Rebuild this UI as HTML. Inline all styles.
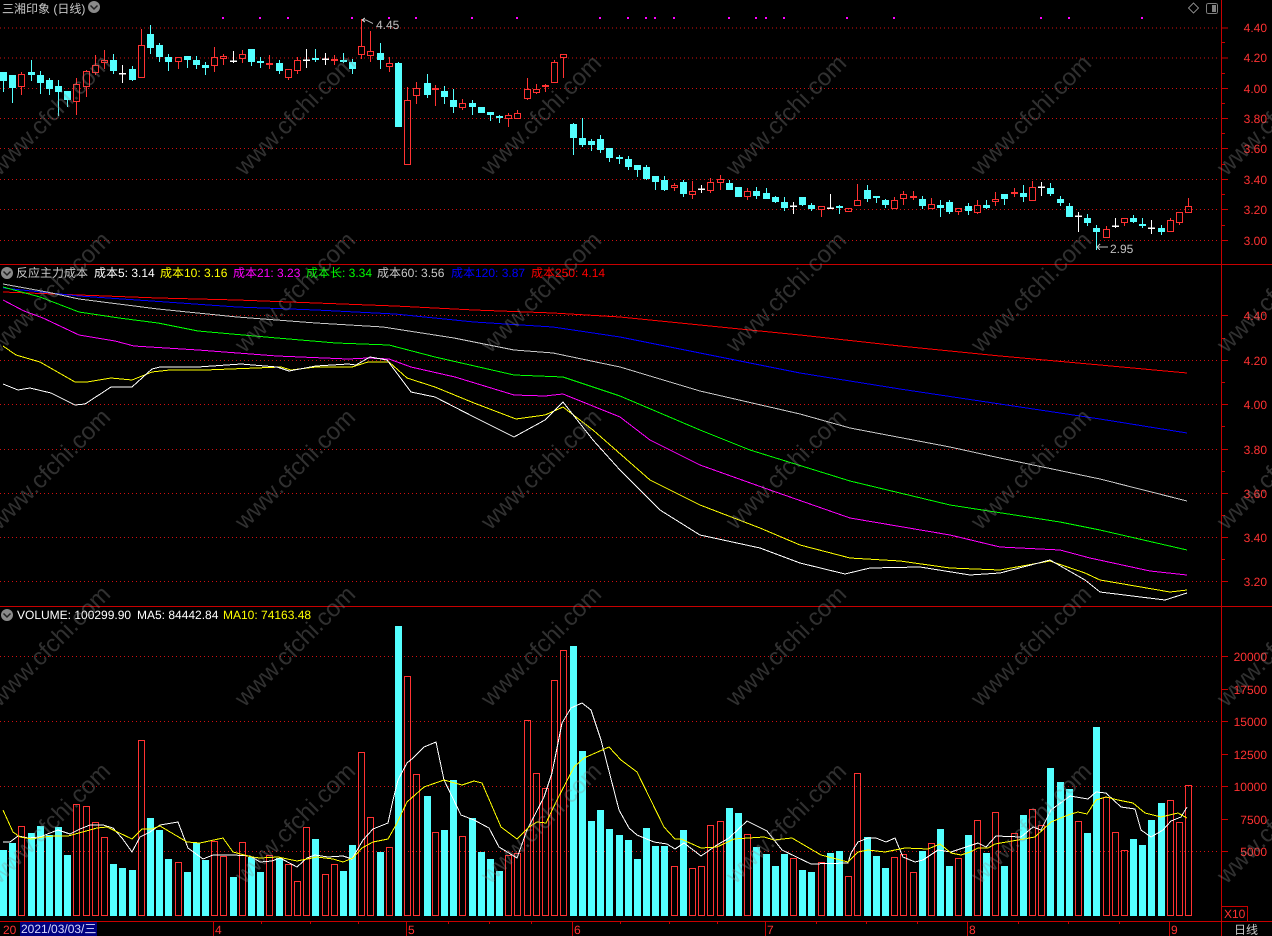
<!DOCTYPE html>
<html><head><meta charset="utf-8"><title>三湘印象</title>
<style>
html,body{margin:0;padding:0;background:#000;width:1272px;height:936px;overflow:hidden}
svg{display:block;position:absolute;left:0;top:0}
text{font-family:"Liberation Sans","WenQuanYi Zen Hei","Noto Sans CJK SC",sans-serif;font-size:12px;text-rendering:geometricPrecision}
</style></head><body>
<svg width="1272" height="936" viewBox="0 0 1272 936" xmlns="http://www.w3.org/2000/svg">
<rect width="1272" height="936" fill="#000"/>
<g shape-rendering="crispEdges">
<!-- grids -->
<path fill="none" stroke="#D01010" stroke-dasharray="1 3" d="M0 28H1218M0 58H1218M0 88.500H1218M0 118.500H1218M0 148.500H1218M0 179.500H1218M0 209.500H1218M0 240.500H1218M0 315.500H1218M0 360.500H1218M0 404.500H1218M0 449.500H1218M0 493.500H1218M0 537.500H1218M0 581.500H1218M0 656.500H1218M0 721.500H1218M0 786.500H1218M0 851.500H1218"/>
<!-- frame -->
<path fill="none" stroke="#C80000" d="M0 264.500H1272M0 606.500H1272M0 921.500H1272M1221.500 0V936M1222 906.500H1247.500V921"/>
<!-- axis ticks -->
<path fill="none" stroke="#C80000" d="M1222 28H1228M1222 58H1228M1222 88.500H1228M1222 118.500H1228M1222 148.500H1228M1222 179.500H1228M1222 209.500H1228M1222 240.500H1228M1222 42.500H1225M1222 73.500H1225M1222 103.500H1225M1222 133.500H1225M1222 164.500H1225M1222 194.500H1225M1222 225.500H1225M1222 315.500H1228M1222 360.500H1228M1222 404.500H1228M1222 449.500H1228M1222 493.500H1228M1222 537.500H1228M1222 581.500H1228M1222 338.500H1225M1222 382.500H1225M1222 426.500H1225M1222 471.500H1225M1222 515.500H1225M1222 559.500H1225M1222 656.500H1228M1222 689.500H1228M1222 721.500H1228M1222 754.500H1228M1222 786.500H1228M1222 819.500H1228M1222 851.500H1228M213.500 921V936M406.500 921V936M572.500 921V936M765.500 921V936M967.500 921V936M1169.500 921V936M261.500 921V924M310.500 921V924M358.500 921V924M448.500 921V924M489.500 921V924M531.500 921V924M620.500 921V924M669.500 921V924M717.500 921V924M816.500 921V924M866.500 921V924M917.500 921V924M1018.500 921V924M1068.500 921V924M1119.500 921V924"/>
<!-- magenta marks -->
<path fill="none" stroke="#FF00FF" stroke-width="2" d="M222 18h2M259 18h2M287 18h2M351 18h2M388 18h2M415 18h2M471 18h2M516 18h2M599 18h2M627 18h2M645 18h2M654 18h2M673 18h2M728 18h2M755 18h2M765 18h2M783 18h2M846 18h2M893 18h2M1040 18h2M1068 18h2M1141 18h2"/>
<!-- candles: cyan wicks -->
<path fill="none" stroke="#54FFFF" d="M3.500 72V92M12.500 75V103M31.500 60V81M40.500 71V94M49.500 78V95M58.500 80V116M67.500 91V107M113.500 54V74M132.500 66V81M150.500 25V54M159.500 43V62M168.500 54V71M187.500 56V68M196.500 56V69M205.500 62V75M251.500 49V66M260.500 57V68M279.500 60V74M315.500 49V62M343.500 53V63M352.500 59V74M380.500 43V69M398.500 62V127M427.500 74V98M444.500 86V104M453.500 89V113M472.500 100V115M490.500 112V121M499.500 115V123M573.500 123V155M582.500 118V147M591.500 139V151M600.500 135V153M609.500 148V162M619.500 155V164M628.500 156V170M637.500 165V177M646.500 165V180M655.500 176V190M664.500 176V191M683.500 180V197M729.500 180V190M756.500 187V199M766.500 188V199M775.500 196V203M784.500 197V211M802.500 197V206M811.500 203V211M839.500 205V214M867.500 185V202M876.500 196V203M885.500 199V208M922.500 196V209M940.500 200V217M949.500 200V214M968.500 203V215M986.500 200V209M1004.500 194V205M1023.500 185V202M1050.500 183V196M1060.500 196V206M1069.500 203V217M1087.500 214V226M1096.500 225V250M1133.500 215V223M1142.500 218V228M1161.500 225V235"/>
<!-- cyan bodies -->
<path fill="none" stroke="#54FFFF" stroke-width="7" d="M3.500 72V81M12.500 75V88M31.500 72V75M40.500 75V83M49.500 80V89M58.500 86V92M67.500 91V100M113.500 60V71M132.500 69V80M150.500 34V48M159.500 45V57M168.500 57V62M187.500 56V60M196.500 60V65M205.500 65V68M251.500 49V62M260.500 61V63M279.500 63V71M315.500 58V60M343.500 60V62M352.500 62V69M380.500 53V60M398.500 63V127M427.500 83V95M444.500 91V97M453.500 100V107M472.500 103V107M481.500 107V113M490.500 112V115M499.500 116V118M573.500 124V138M582.500 138V145M591.500 141V145M600.500 139V150M609.500 148V158M619.500 157V159M628.500 159V167M637.500 165V170M646.500 167V179M655.500 176V182M664.500 180V190M683.500 182V194M729.500 183V190M738.500 187V197M756.500 191V196M766.500 193V199M775.500 197V202M784.500 202V208M802.500 197V205M811.500 205V209M839.500 206V208M867.500 190V199M876.500 196V198M885.500 200V205M922.500 199V206M940.500 205V208M949.500 202V212M968.500 206V211M986.500 205V208M1004.500 194V199M1023.500 193V197M1050.500 188V194M1060.500 199V203M1069.500 206V217M1087.500 218V223M1096.500 228V232M1133.500 218V222M1142.500 224V226M1161.500 228V232"/>
<!-- white dojis -->
<path fill="none" stroke="#fff" d="M122.500 65V83M233.500 51V63M306.500 49V68M325.500 53V65M701.500 185V193M793.500 202V214M830.500 194V209M1041.500 182V196M1078.500 212V232M1115.500 218V228M1151.500 220V234"/>
<path fill="none" stroke="#fff" stroke-width="7" d="M122.500 73V74.500M233.500 60.500V62M306.500 59.500V61M325.500 58.500V60M701.500 188.500V190M793.500 205.500V207M830.500 207.500V209M1041.500 186.500V188M1078.500 215.500V217M1115.500 225.500V227M1151.500 227.500V229"/>
<!-- red candles wicks -->
<path fill="none" stroke="#FF3232" d="M21.500 72V74M21.500 87V95M76.500 78V84M76.500 102V115M86.500 70V71M86.500 87V97M95.500 55V65M95.500 73V75M104.500 50V60M104.500 63V69M141.500 29V45M178.500 62V69M214.500 47V57M214.500 66V72M223.500 54V56M223.500 59V65M242.500 50V54M242.500 59V63M269.500 55V63M269.500 65V69M288.500 78V80M297.500 57V60M297.500 71V74M361.500 19V46M361.500 55V59M370.500 31V51M370.500 56V62M389.500 57V63M389.500 67V72M407.500 87V100M416.500 82V88M416.500 96V104M462.500 99V103M462.500 108V110M508.500 113V115M508.500 119V127M517.500 110V113M527.500 78V89M527.500 99V100M536.500 84V89M536.500 93V94M545.500 84V85M545.500 87V92M554.500 60V62M563.500 58V78M674.500 183V185M674.500 188V191M692.500 181V191M692.500 195V199M710.500 178V182M710.500 191V193M720.500 175V179M720.500 183V190M747.500 188V191M747.500 197V200M821.500 210V217M857.500 184V200M894.500 197V200M903.500 191V194M903.500 199V205M931.500 198V204M958.500 212V215M977.500 200V205M977.500 213V214M995.500 192V199M995.500 202V206M1032.500 181V187M1106.500 226V229M1124.500 223V226M1170.500 218V220M1179.500 223V225M1188.500 198V206M334.500 55V65M435.500 85V106M913.500 191V200M1014.500 188V197"/>
<path fill="none" stroke="#FF3232" stroke-width="7" d="M334.500 59V61M435.500 88V90M913.500 196V198M1014.500 192V194"/>
<!-- red hollow bodies -->
<path fill="none" stroke="#FF3232" d="M18.500 74.500h6V86.500h-6zM73.500 84.500h6V101.500h-6zM83.500 71.500h6V86.500h-6zM92.500 65.500h6V72.500h-6zM101.500 60.500h6V62.500h-6zM138.500 45.500h6V77.500h-6zM175.500 57.500h6V61.500h-6zM211.500 57.500h6V65.500h-6zM220.500 56.500h6V58.500h-6zM239.500 54.500h6V58.500h-6zM266.500 63.500h6V64.500h-6zM285.500 69.500h6V77.500h-6zM294.500 60.500h6V70.500h-6zM358.500 46.500h6V54.500h-6zM367.500 51.500h6V55.500h-6zM386.500 63.500h6V66.500h-6zM404.500 100.500h6V164.500h-6zM413.500 88.500h6V95.500h-6zM459.500 103.500h6V107.500h-6zM505.500 115.500h6V118.500h-6zM514.500 113.500h6V118.500h-6zM524.500 89.500h6V98.500h-6zM533.500 89.500h6V92.500h-6zM542.500 85.500h6V86.500h-6zM551.500 62.500h6V82.500h-6zM560.500 54.500h6V57.500h-6zM671.500 185.500h6V187.500h-6zM689.500 191.500h6V194.500h-6zM707.500 182.500h6V190.500h-6zM717.500 179.500h6V182.500h-6zM744.500 191.500h6V196.500h-6zM818.500 206.500h6V209.500h-6zM845.500 208.500h6V211.500h-6zM854.500 200.500h6V205.500h-6zM891.500 200.500h6V208.500h-6zM900.500 194.500h6V198.500h-6zM928.500 204.500h6V208.500h-6zM955.500 208.500h6V211.500h-6zM974.500 205.500h6V212.500h-6zM992.500 199.500h6V201.500h-6zM1029.500 187.500h6V200.500h-6zM1103.500 229.500h6V237.500h-6zM1121.500 218.500h6V222.500h-6zM1167.500 220.500h6V231.500h-6zM1176.500 212.500h6V222.500h-6zM1185.500 206.500h6V212.500h-6z"/>
<!-- volume cyan -->
<path fill="none" stroke="#54FFFF" stroke-width="7" d="M3.500 850V916M12.500 843V916M31.500 833V916M40.500 826V916M49.500 835V916M58.500 827V916M67.500 855V916M113.500 864V916M122.500 868V916M132.500 870V916M150.500 818V916M159.500 830V916M168.500 859V916M187.500 872V916M196.500 843V916M205.500 860V916M233.500 877V916M251.500 857V916M260.500 872V916M279.500 858V916M315.500 839V916M343.500 871V916M352.500 845V916M380.500 852V916M398.500 626V916M427.500 796V916M444.500 830V916M453.500 780V916M472.500 818V916M481.500 852V916M490.500 859V916M499.500 871V916M573.500 646V916M582.500 751V916M591.500 821V916M600.500 810V916M609.500 829V916M619.500 835V916M628.500 840V916M637.500 859V916M646.500 828V916M655.500 846V916M664.500 846V916M683.500 830V916M729.500 808V916M738.500 813V916M756.500 847V916M766.500 854V916M775.500 866V916M784.500 854V916M802.500 870V916M811.500 872V916M830.500 853V916M839.500 851V916M867.500 837V916M876.500 856V916M885.500 868V916M922.500 851V916M940.500 829V916M949.500 866V916M968.500 835V916M986.500 853V916M1004.500 866V916M1023.500 815V916M1050.500 768V916M1060.500 782V916M1069.500 789V916M1087.500 833V916M1096.500 727V916M1133.500 839V916M1142.500 845V916M1151.500 820V916M1161.500 803V916"/>
<!-- volume red -->
<path fill="none" stroke="#FF3232" d="M18.500 826.500h6V915.500h-6zM73.500 804.500h6V915.500h-6zM83.500 806.500h6V915.500h-6zM92.500 822.500h6V915.500h-6zM101.500 837.500h6V915.500h-6zM138.500 740.500h6V915.500h-6zM175.500 862.500h6V915.500h-6zM211.500 841.500h6V915.500h-6zM220.500 856.500h6V915.500h-6zM239.500 842.500h6V915.500h-6zM266.500 855.500h6V915.500h-6zM285.500 864.500h6V915.500h-6zM294.500 881.500h6V915.500h-6zM303.500 827.500h6V915.500h-6zM322.500 874.500h6V915.500h-6zM331.500 864.500h6V915.500h-6zM358.500 752.500h6V915.500h-6zM367.500 817.500h6V915.500h-6zM386.500 847.500h6V915.500h-6zM404.500 676.500h6V915.500h-6zM413.500 774.500h6V915.500h-6zM432.500 832.500h6V915.500h-6zM459.500 836.500h6V915.500h-6zM505.500 855.500h6V915.500h-6zM514.500 853.500h6V915.500h-6zM524.500 720.500h6V915.500h-6zM533.500 773.500h6V915.500h-6zM542.500 788.500h6V915.500h-6zM551.500 680.500h6V915.500h-6zM560.500 650.500h6V915.500h-6zM671.500 866.500h6V915.500h-6zM689.500 868.500h6V915.500h-6zM698.500 866.500h6V915.500h-6zM707.500 825.500h6V915.500h-6zM717.500 821.500h6V915.500h-6zM744.500 834.500h6V915.500h-6zM790.500 858.500h6V915.500h-6zM818.500 862.500h6V915.500h-6zM845.500 876.500h6V915.500h-6zM854.500 773.500h6V915.500h-6zM891.500 857.500h6V915.500h-6zM900.500 854.500h6V915.500h-6zM910.500 872.500h6V915.500h-6zM928.500 843.500h6V915.500h-6zM955.500 858.500h6V915.500h-6zM974.500 820.500h6V915.500h-6zM992.500 812.500h6V915.500h-6zM1011.500 833.500h6V915.500h-6zM1029.500 809.500h6V915.500h-6zM1038.500 825.500h6V915.500h-6zM1075.500 821.500h6V915.500h-6zM1103.500 797.500h6V915.500h-6zM1112.500 832.500h6V915.500h-6zM1121.500 850.500h6V915.500h-6zM1167.500 800.500h6V915.500h-6zM1176.500 822.500h6V915.500h-6zM1185.500 785.500h6V915.500h-6z"/>
<!-- volume MAs -->
<polyline fill="none" stroke="#fff" points="3,842 10,842 18,836 28,838 40,837 50,833 58,830 70,834 80,829 90,825 103,825 113,828 122,838 132,852 140,837 150,832 160,825 178,822 188,848 203,859 213,855 233,855 250,856 260,862 272,861 280,858 297,867 307,858 315,855 328,857 343,856 352,859 363,840 373,829 388,823 393,800 398,780 407,763 413,758 424,747 436,742 444,780 461,815 474,820 489,828 499,847 517,858 527,830 544,797 552,773 562,723 571,708 582,703 591,710 601,740 619,810 629,828 637,835 654,842 667,844 675,849 684,843 701,856 717,845 729,838 747,821 767,831 782,850 811,864 848,863 851,853 858,842 868,838 876,838 886,842 895,838 903,857 915,862 923,860 938,850 951,852 978,843 986,847 996,836 1021,837 1033,827 1041,830 1051,810 1070,796 1088,799 1096,792 1106,793 1121,807 1135,809 1141,830 1151,837 1163,830 1171,821 1181,817 1187,807"/>
<polyline fill="none" stroke="#FFFF00" points="3,810 13,832 20,837 32,839 43,837 55,836 68,836 97,828 107,827 132,839 142,829 152,829 160,826 187,842 200,843 223,838 233,852 252,857 260,858 278,857 297,861 317,857 333,859 343,862 353,858 362,848 373,842 388,839 397,823 407,802 424,787 444,780 462,785 474,781 482,783 501,827 517,839 529,827 537,822 546,823 557,800 574,767 584,758 609,747 621,760 637,772 664,827 675,839 681,839 701,848 717,847 734,839 764,837 774,840 792,838 821,855 848,862 858,852 868,850 885,852 905,848 928,849 940,844 951,853 961,855 970,852 978,848 988,848 995,844 1035,837 1051,822 1068,815 1078,812 1087,814 1096,800 1106,797 1118,800 1133,803 1145,813 1161,817 1178,813 1187,818"/>
<!-- cost lines -->
<polyline fill="none" stroke="#FF0000" points="3,292 79,295 158,298 237,300 316,303 395,306 474,310 553,313 620,317 700,325 800,335 900,346 1000,356 1100,365 1187,373"/>
<polyline fill="none" stroke="#0000FF" points="3,288 79,296 166,302 237,307 316,310 395,314 474,322 553,327 620,337 700,353 800,373 900,389 1000,404 1100,419 1187,433"/>
<polyline fill="none" stroke="#C8C8C8" points="3,284 47,292 79,299 158,309 237,317 316,323 383,327 454,338 514,350 553,353 620,367 700,391 800,414 850,428 950,447 1000,458 1100,479 1187,501"/>
<polyline fill="none" stroke="#00FF00" points="3,287 40,297 79,312 119,318 158,323 198,331 277,338 336,343 389,345 435,357 514,375 563,377 620,396 700,430 750,450 850,481 950,505 1060,522 1100,530 1187,550"/>
<polyline fill="none" stroke="#FF00FF" points="3,300 24,311 43,318 79,335 115,341 134,346 198,350 277,356 348,359 368,358 389,359 411,367 455,377 514,395 545,396 563,394 620,417 650,440 700,465 770,490 850,518 950,535 1000,547 1060,550 1090,558 1150,571 1187,575"/>
<polyline fill="none" stroke="#FFFF00" points="3,346 16,355 40,362 75,382 87,382 111,378 132,380 152,372 170,370 205,370 281,367 291,370 316,367 352,367 368,362 389,362 407,378 435,387 474,403 516,419 545,415 563,407 593,430 650,480 700,505 760,528 800,545 850,558 900,561 950,568 1000,570 1050,561 1085,573 1100,580 1170,592 1187,590"/>
<polyline fill="none" stroke="#fff" points="3,384 18,390 30,388 51,393 75,405 85,404 111,387 132,387 152,369 160,367 198,367 241,364 277,367 289,371 316,366 348,364 356,365 370,357 387,360 411,392 435,397 474,417 514,437 545,420 563,402 593,440 620,470 660,510 700,535 760,548 800,563 845,574 870,568 920,567 970,575 1000,573 1050,560 1085,580 1100,592 1165,600 1187,593"/>
<!-- annotation arrows -->
<path fill="none" stroke="#C0C0C0" d="M362 20H366L373 23.500M362 20L365 18M362 20L365 22M1097 247H1108M1097 247L1100 244M1097 247L1100 250"/>
<!-- date box -->
<rect x="20" y="922" width="77" height="14" fill="#000080"/>
<!-- top-right icons -->
<path fill="none" stroke="#808080" d="M1193.500 3L1198.500 8L1193.500 13L1188.500 8Z"/>
<rect x="1206.500" y="3.500" width="11" height="10" rx="2" fill="none" stroke="#808080"/>
<rect x="1212" y="5" width="4" height="7" fill="#808080"/>
</g>
<!-- menu icons -->
<circle cx="94" cy="7" r="6" fill="#8a8a8a"/><path d="M90.500 5.500L94 9L97.500 5.500" fill="none" stroke="#222" stroke-width="1.500"/>
<circle cx="7" cy="273" r="6" fill="#8a8a8a"/><path d="M3.500 271.500L7 275L10.500 271.500" fill="none" stroke="#222" stroke-width="1.500"/>
<circle cx="7" cy="615" r="6" fill="#8a8a8a"/><path d="M3.500 613.500L7 617L10.500 613.500" fill="none" stroke="#222" stroke-width="1.500"/>
<!-- texts -->
<text x="2" y="13" fill="#C8C8C8">三湘印象 (日线)</text>
<text x="16" y="277" fill="#C8C8C8">反应主力成本</text>
<text x="94" y="277" fill="#fff">成本5: 3.14</text>
<text x="160" y="277" fill="#FFFF00">成本10: 3.16</text>
<text x="233" y="277" fill="#FF00FF">成本21: 3.23</text>
<text x="306" y="277" fill="#00FF00">成本长: 3.34</text>
<text x="377" y="277" fill="#C8C8C8">成本60: 3.56</text>
<text x="451" y="277" fill="#0000FF">成本120: 3.87</text>
<text x="531" y="277" fill="#FF0000">成本250: 4.14</text>
<text x="17" y="619" fill="#fff">VOLUME: 100299.90</text>
<text x="137" y="619" fill="#fff">MA5: 84442.84</text>
<text x="223" y="619" fill="#FFFF00">MA10: 74163.48</text>
<text x="376" y="29" fill="#C0C0C0">4.45</text>
<text x="1110" y="253" fill="#C0C0C0">2.95</text>
<g fill="#FF3232" text-anchor="end">
<text x="1267" y="32">4.40</text><text x="1267" y="62">4.20</text><text x="1267" y="93">4.00</text><text x="1267" y="123">3.80</text><text x="1267" y="153">3.60</text><text x="1267" y="184">3.40</text><text x="1267" y="214">3.20</text><text x="1267" y="245">3.00</text>
<text x="1267" y="320">4.40</text><text x="1267" y="365">4.20</text><text x="1267" y="409">4.00</text><text x="1267" y="454">3.80</text><text x="1267" y="498">3.60</text><text x="1267" y="542">3.40</text><text x="1267" y="586">3.20</text>
<text x="1267" y="661">20000</text><text x="1267" y="694">17500</text><text x="1267" y="726">15000</text><text x="1267" y="759">12500</text><text x="1267" y="791">10000</text><text x="1267" y="824">7500</text><text x="1267" y="856">5000</text>
</g>
<g fill="#FF3232">
<text x="3" y="934">20</text>
<text x="215" y="934">4</text><text x="408" y="934">5</text><text x="574" y="934">6</text><text x="767" y="934">7</text><text x="969" y="934">8</text><text x="1171" y="934">9</text>
<text x="1224" y="918">X10</text>
</g>
<text x="21" y="933" fill="#D8D8FF">2021/03/03/三</text>
<text x="1234" y="934" fill="#C8C8C8">日线</text>
<!-- watermark -->
<g fill="#8c8c8c" fill-opacity=".34" text-anchor="middle" style="font-size:24px">
<text style="font-size:24px" x="50" y="123" transform="rotate(-45 50 115)">www.cfchi.com</text>
<text style="font-size:24px" x="295" y="123" transform="rotate(-45 295 115)">www.cfchi.com</text>
<text style="font-size:24px" x="541" y="123" transform="rotate(-45 541 115)">www.cfchi.com</text>
<text style="font-size:24px" x="786" y="123" transform="rotate(-45 786 115)">www.cfchi.com</text>
<text style="font-size:24px" x="1031" y="123" transform="rotate(-45 1031 115)">www.cfchi.com</text>
<text style="font-size:24px" x="1277" y="123" transform="rotate(-45 1277 115)">www.cfchi.com</text>
<text style="font-size:24px" x="50" y="300" transform="rotate(-45 50 292)">www.cfchi.com</text>
<text style="font-size:24px" x="295" y="300" transform="rotate(-45 295 292)">www.cfchi.com</text>
<text style="font-size:24px" x="541" y="300" transform="rotate(-45 541 292)">www.cfchi.com</text>
<text style="font-size:24px" x="786" y="300" transform="rotate(-45 786 292)">www.cfchi.com</text>
<text style="font-size:24px" x="1031" y="300" transform="rotate(-45 1031 292)">www.cfchi.com</text>
<text style="font-size:24px" x="1277" y="300" transform="rotate(-45 1277 292)">www.cfchi.com</text>
<text style="font-size:24px" x="50" y="477" transform="rotate(-45 50 469)">www.cfchi.com</text>
<text style="font-size:24px" x="295" y="477" transform="rotate(-45 295 469)">www.cfchi.com</text>
<text style="font-size:24px" x="541" y="477" transform="rotate(-45 541 469)">www.cfchi.com</text>
<text style="font-size:24px" x="786" y="477" transform="rotate(-45 786 469)">www.cfchi.com</text>
<text style="font-size:24px" x="1031" y="477" transform="rotate(-45 1031 469)">www.cfchi.com</text>
<text style="font-size:24px" x="1277" y="477" transform="rotate(-45 1277 469)">www.cfchi.com</text>
<text style="font-size:24px" x="50" y="654" transform="rotate(-45 50 646)">www.cfchi.com</text>
<text style="font-size:24px" x="295" y="654" transform="rotate(-45 295 646)">www.cfchi.com</text>
<text style="font-size:24px" x="541" y="654" transform="rotate(-45 541 646)">www.cfchi.com</text>
<text style="font-size:24px" x="786" y="654" transform="rotate(-45 786 646)">www.cfchi.com</text>
<text style="font-size:24px" x="1031" y="654" transform="rotate(-45 1031 646)">www.cfchi.com</text>
<text style="font-size:24px" x="1277" y="654" transform="rotate(-45 1277 646)">www.cfchi.com</text>
<text style="font-size:24px" x="50" y="831" transform="rotate(-45 50 823)">www.cfchi.com</text>
<text style="font-size:24px" x="295" y="831" transform="rotate(-45 295 823)">www.cfchi.com</text>
<text style="font-size:24px" x="541" y="831" transform="rotate(-45 541 823)">www.cfchi.com</text>
<text style="font-size:24px" x="786" y="831" transform="rotate(-45 786 823)">www.cfchi.com</text>
<text style="font-size:24px" x="1031" y="831" transform="rotate(-45 1031 823)">www.cfchi.com</text>
<text style="font-size:24px" x="1277" y="831" transform="rotate(-45 1277 823)">www.cfchi.com</text>
</g>
</svg>
</body></html>
